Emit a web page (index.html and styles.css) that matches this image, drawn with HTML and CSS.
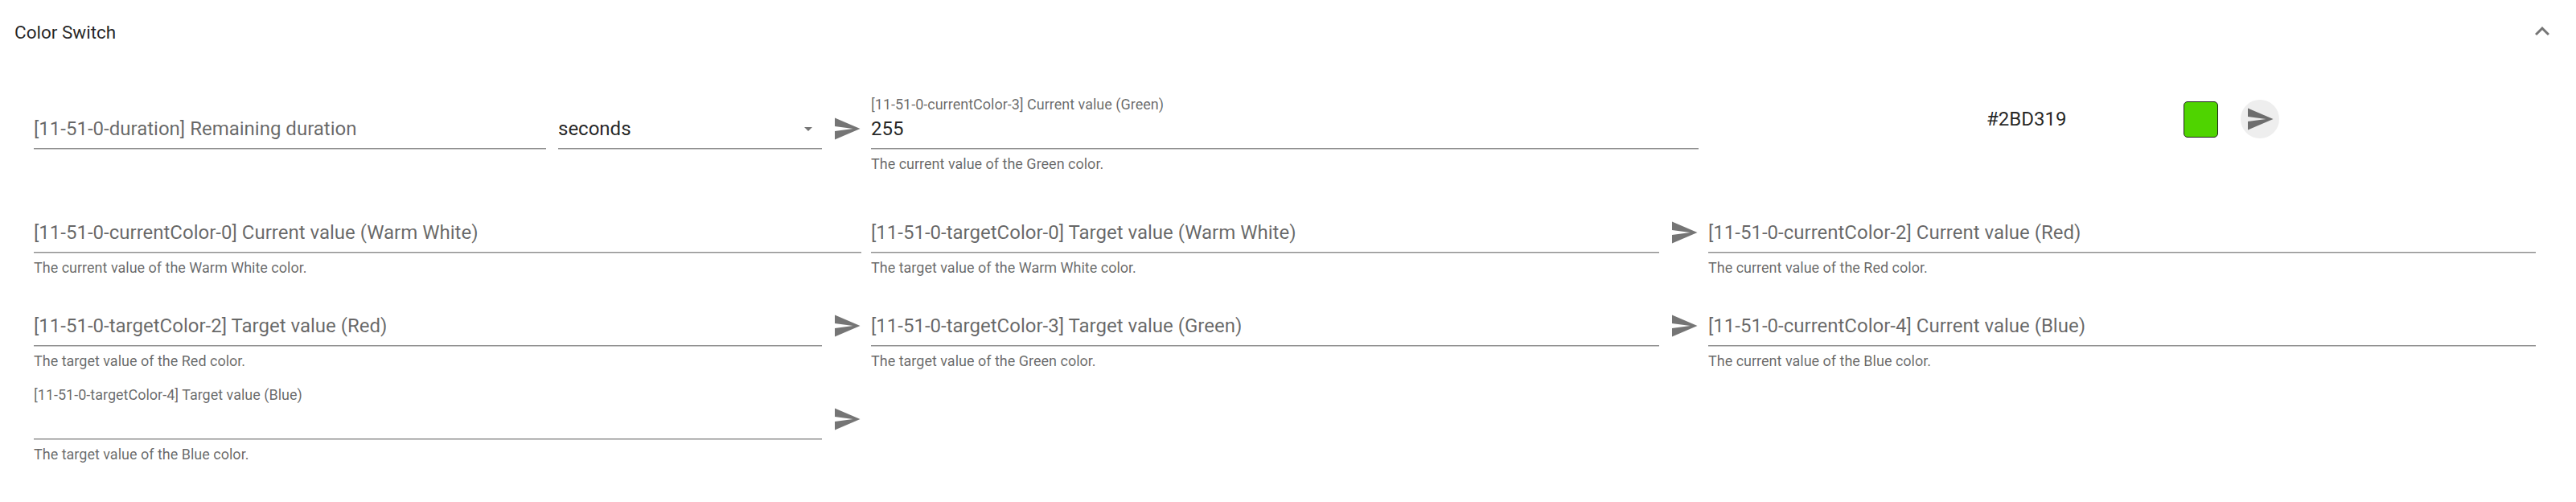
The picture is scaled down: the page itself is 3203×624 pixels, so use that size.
FILE: index.html
```html
<!DOCTYPE html>
<html lang="en">
<head>
<meta charset="utf-8">
<title>Color Switch</title>
<link rel="stylesheet" href="styles.css">
</head>
<body>
<section class="panel">
  <header class="panel-header">
    <span class="panel-title">Color Switch</span>
    <svg class="icon" viewBox="0 0 24 24"><path d="M7.41,15.41L12,10.83L16.59,15.41L18,14L12,8L6,14L7.41,15.41Z"/></svg>
  </header>

  <div class="panel-content">
    <div class="grid">
      <!-- duration + unit -->
      <div class="cell lead">
        <div class="field">
          <div class="field-label"></div>
          <div class="field-input"><span class="placeholder">[11-51-0-duration] Remaining duration</span></div>
        </div>
        <div class="field select">
          <div class="field-label"></div>
          <div class="field-input">
            <span class="value">seconds</span>
            <svg class="caret" viewBox="0 0 24 24"><path d="M7,10L12,15L17,10H7Z"/></svg>
          </div>
        </div>
        <button class="send" type="button"><svg class="icon" viewBox="0 0 24 24"><path d="M2,21L23,12L2,3V10L17,12L2,14V21Z"/></svg></button>
      </div>

      <div class="cell lead">
        <div class="field">
          <div class="field-label">[11-51-0-currentColor-3] Current value (Green)</div>
          <div class="field-input"><span class="value">255</span></div>
          <div class="field-hint">The current value of the Green color.</div>
        </div>
      </div>

      <!-- colour picker -->
      <div class="cell lead picker">
        <span class="hex">#2BD319</span>
        <span class="swatch"></span>
        <button class="round" type="button"><svg class="icon" viewBox="0 0 24 24"><path d="M2,21L23,12L2,3V10L17,12L2,14V21Z"/></svg></button>
      </div>

      <div class="cell">
        <div class="field">
          <div class="field-label"></div>
          <div class="field-input"><span class="placeholder">[11-51-0-currentColor-0] Current value (Warm White)</span></div>
          <div class="field-hint">The current value of the Warm White color.</div>
        </div>
      </div>

      <div class="cell">
        <div class="field">
          <div class="field-label"></div>
          <div class="field-input"><span class="placeholder">[11-51-0-targetColor-0] Target value (Warm White)</span></div>
          <div class="field-hint">The target value of the Warm White color.</div>
        </div>
        <button class="send" type="button"><svg class="icon" viewBox="0 0 24 24"><path d="M2,21L23,12L2,3V10L17,12L2,14V21Z"/></svg></button>
      </div>

      <div class="cell">
        <div class="field">
          <div class="field-label"></div>
          <div class="field-input"><span class="placeholder">[11-51-0-currentColor-2] Current value (Red)</span></div>
          <div class="field-hint">The current value of the Red color.</div>
        </div>
      </div>

      <div class="cell">
        <div class="field">
          <div class="field-label"></div>
          <div class="field-input"><span class="placeholder">[11-51-0-targetColor-2] Target value (Red)</span></div>
          <div class="field-hint">The target value of the Red color.</div>
        </div>
        <button class="send" type="button"><svg class="icon" viewBox="0 0 24 24"><path d="M2,21L23,12L2,3V10L17,12L2,14V21Z"/></svg></button>
      </div>

      <div class="cell">
        <div class="field">
          <div class="field-label"></div>
          <div class="field-input"><span class="placeholder">[11-51-0-targetColor-3] Target value (Green)</span></div>
          <div class="field-hint">The target value of the Green color.</div>
        </div>
        <button class="send" type="button"><svg class="icon" viewBox="0 0 24 24"><path d="M2,21L23,12L2,3V10L17,12L2,14V21Z"/></svg></button>
      </div>

      <div class="cell">
        <div class="field">
          <div class="field-label"></div>
          <div class="field-input"><span class="placeholder">[11-51-0-currentColor-4] Current value (Blue)</span></div>
          <div class="field-hint">The current value of the Blue color.</div>
        </div>
      </div>

      <div class="cell">
        <div class="field">
          <div class="field-label">[11-51-0-targetColor-4] Target value (Blue)</div>
          <div class="field-input"></div>
          <div class="field-hint">The target value of the Blue color.</div>
        </div>
        <button class="send" type="button"><svg class="icon" viewBox="0 0 24 24"><path d="M2,21L23,12L2,3V10L17,12L2,14V21Z"/></svg></button>
      </div>
    </div>
  </div>
</section>
</body>
</html>
```

FILE: styles.css
```css
* {
  box-sizing: border-box;
}

html,
body {
  margin: 0;
  background: #ffffff;
}

body {
  font-family: Roboto, "Liberation Sans", Arial, sans-serif;
  color: rgba(0, 0, 0, 0.87);
}

/* panel header */
.panel-header {
  display: flex;
  align-items: center;
  justify-content: space-between;
  height: 78px;
  padding: 0 24px 0 18px;
}

.panel-title {
  font-size: 22.5px;
  line-height: 1;
  padding-top: 2px;
}

.icon {
  display: block;
  width: 36px;
  height: 36px;
  fill: rgba(0, 0, 0, 0.54);
}

/* panel body */
.panel-content {
  padding: 42px 50px 24px 42px;
}

.grid {
  display: grid;
  grid-template-columns: repeat(3, 1fr);
  column-gap: 12px;
  row-gap: 23px;
  align-items: start;
}

.cell {
  display: flex;
  align-items: flex-start;
  min-width: 0;
}

.cell.lead {
  margin-bottom: 13px;
}

/* text fields */
.field {
  flex: 1;
  min-width: 0;
}

.field-label {
  height: 20px;
  font-size: 18px;
  line-height: 20px;
  color: rgba(0, 0, 0, 0.6);
  white-space: nowrap;
}

.field-input {
  display: flex;
  align-items: center;
  height: 45px;
  padding: 5px 0 9px;
  font-size: 24px;
  line-height: 30px;
  border-bottom: 1px solid #8e8e8e;
  box-shadow: 0 1px 0 #c9c9c9;
  white-space: nowrap;
}

.placeholder {
  color: rgba(0, 0, 0, 0.6);
}

.value {
  color: rgba(0, 0, 0, 0.87);
}

.field-hint {
  margin-top: 10px;
  font-size: 18px;
  line-height: 18px;
  color: rgba(0, 0, 0, 0.6);
  white-space: nowrap;
}

/* unit select */
.field.select {
  flex: 0 0 328px;
  margin-left: 15px;
}

.select .field-input {
  justify-content: space-between;
}

.caret {
  display: block;
  width: 24px;
  height: 24px;
  margin-right: 5px;
  fill: rgba(0, 0, 0, 0.54);
}

/* send action next to a field */
.send {
  flex: 0 0 36px;
  width: 36px;
  height: 36px;
  margin: 22px 0 0 13px;
  padding: 0;
  border: 0;
  background: none;
  cursor: pointer;
}

/* colour picker */
.picker {
  align-items: center;
  padding-top: 4px;
}

.hex {
  width: 245px;
  margin-left: 346px;
  font-size: 24px;
  line-height: 30px;
  color: rgba(0, 0, 0, 0.87);
}

.swatch {
  width: 43px;
  height: 45px;
  border: 1px solid #1f1f1f;
  border-radius: 5px;
  background: #4fd400;
}

.round {
  display: flex;
  align-items: center;
  justify-content: center;
  width: 48px;
  height: 48px;
  margin-left: 28px;
  padding: 0;
  border: 0;
  border-radius: 50%;
  background: #eeeeee;
  cursor: pointer;
}
```
